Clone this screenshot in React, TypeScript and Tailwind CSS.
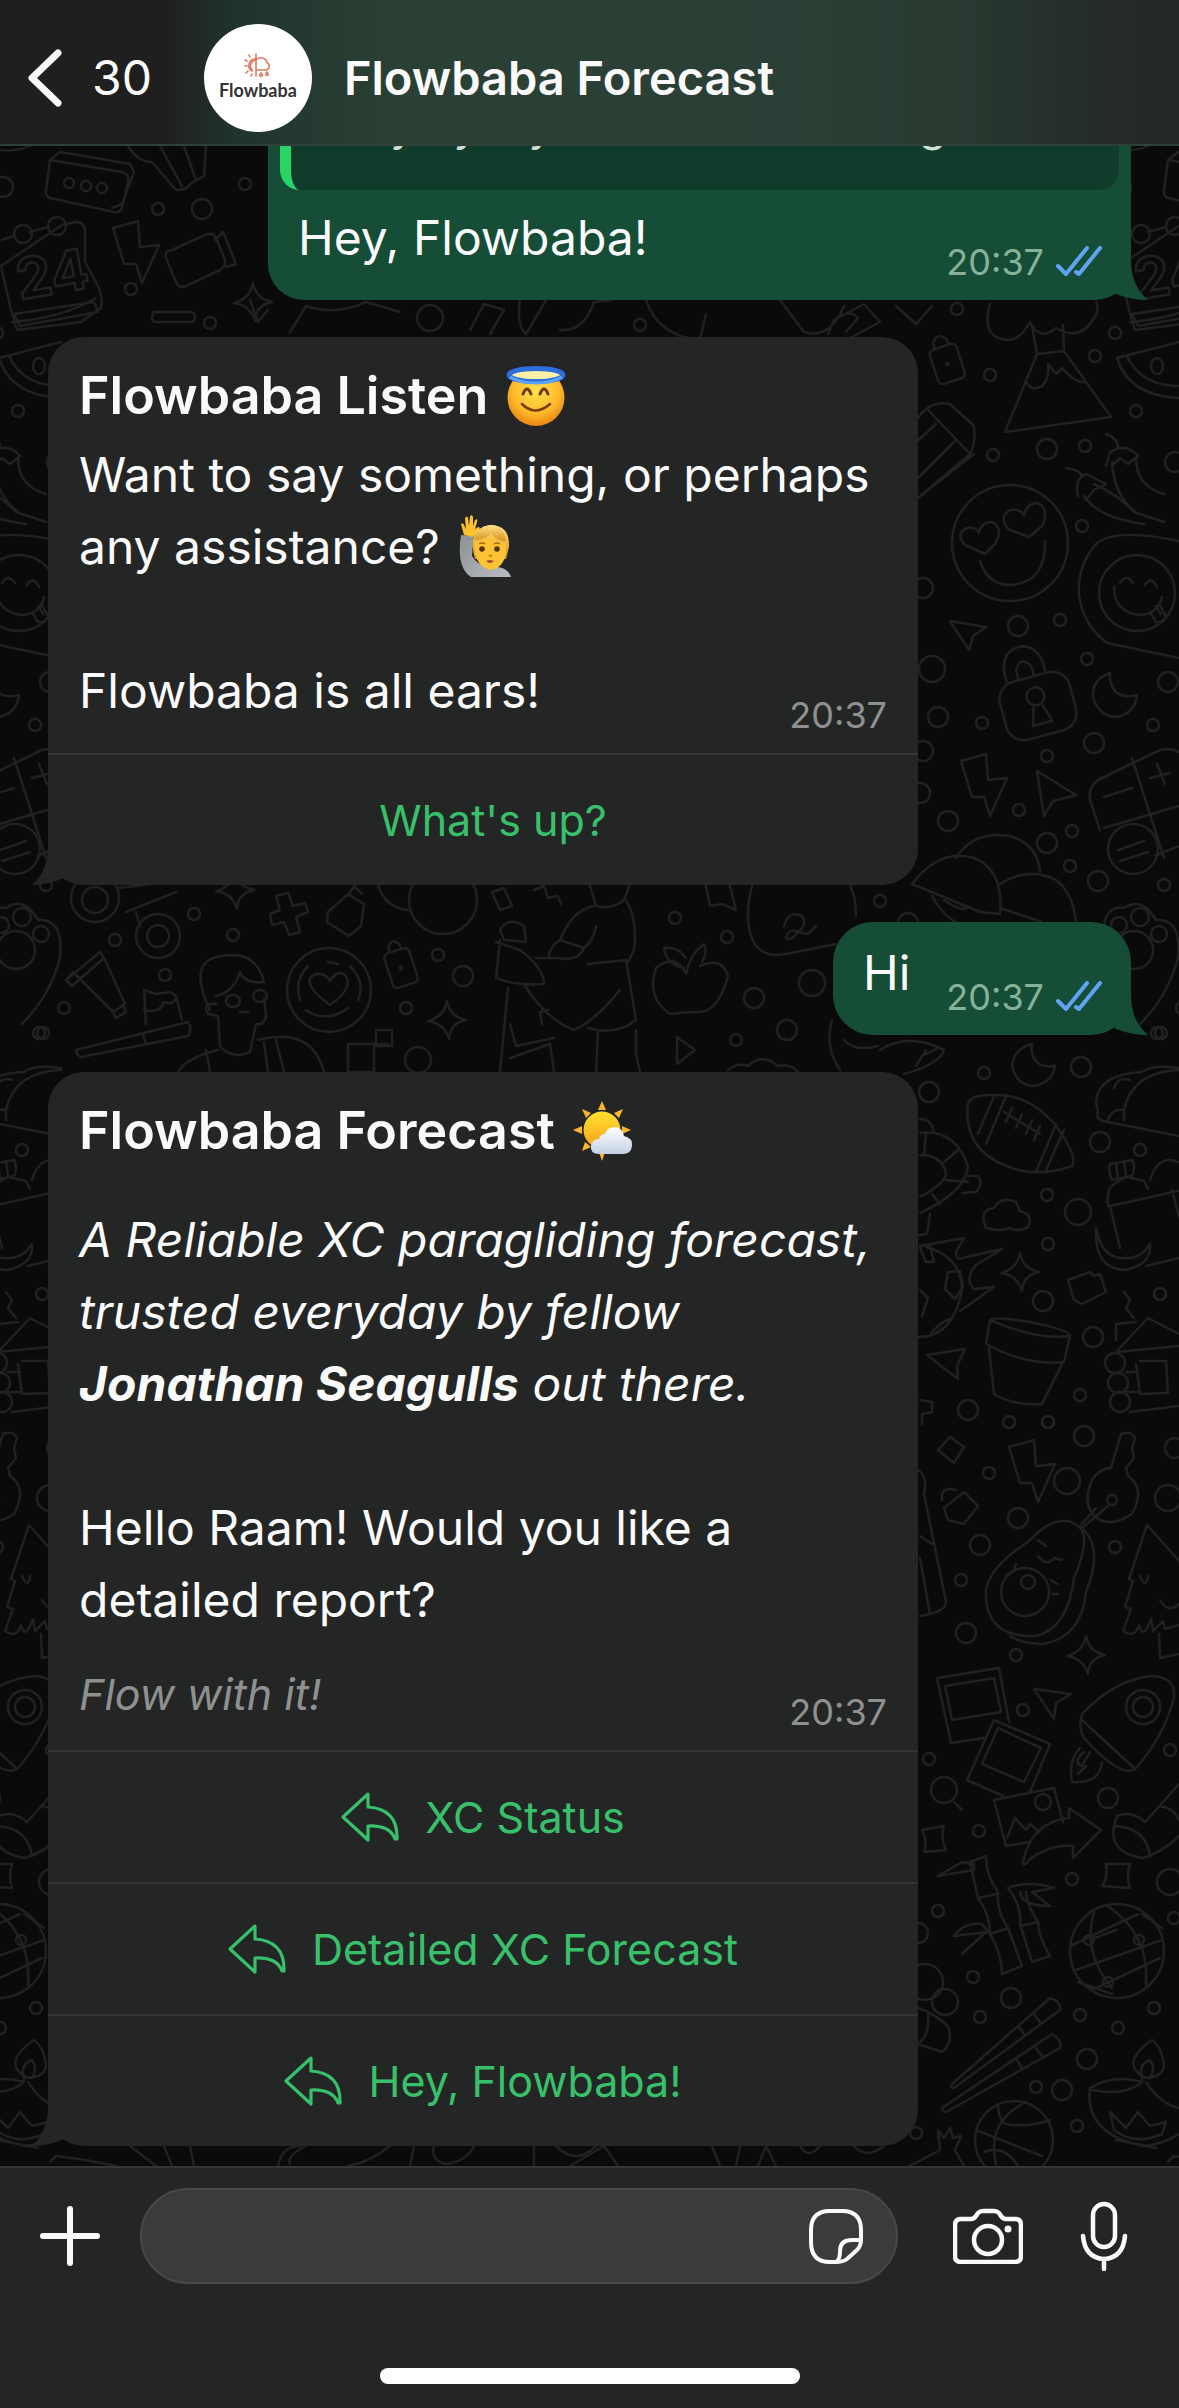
import React from "react";

const SMALL_DOTS: [number, number][] = [
  [245, 184], [158, 209], [131, 289], [957, 309], [990, 375], [1115, 333], [1095, 356], [1136, 411],
  [993, 455], [1085, 446], [1082, 526], [1060, 620], [1087, 659], [982, 723], [1047, 756], [1153, 725],
  [1019, 810], [1072, 831], [1070, 866], [1164, 885], [880, 901], [194, 914], [233, 935], [115, 940],
  [165, 975], [64, 1008], [39, 1033], [438, 955], [406, 1008], [675, 918], [727, 937], [736, 1040],
  [984, 1073], [1161, 1033], [1140, 1150], [1047, 1195], [1048, 1244], [1160, 1294], [1009, 1422],
  [1048, 1422], [1080, 1395], [989, 1473], [961, 1580], [1115, 1547], [1016, 1655], [1023, 1710],
  [929, 1759], [979, 1831], [1072, 1879], [1170, 1750], [938, 1911], [973, 1977], [980, 2017],
  [1080, 2015], [1154, 2008], [1118, 2028], [1036, 2087], [1077, 2126], [916, 2133], [1174, 1918],
  [210, 323], [640, 325],
];
const MEDIUM_DOTS: [number, number][] = [
  [3, 187], [202, 209], [1047, 449], [1175, 462], [1018, 626], [923, 588], [938, 717], [923, 751],
  [1094, 743], [1168, 682], [920, 793], [948, 821], [1047, 843], [1098, 881], [908, 923], [463, 976],
  [754, 998], [787, 1030], [1081, 1067], [929, 1092], [1100, 1142], [1043, 1301], [1093, 1337],
  [968, 1410], [1084, 1436], [1018, 1518], [980, 1545], [966, 1633], [1175, 1448], [1108, 1798],
  [918, 1933], [1011, 1998], [1087, 2059], [1062, 2090],
];
const LARGE_DOTS: [number, number][] = [
  [932, 669], [812, 983], [418, 1060], [1078, 1212], [1067, 1481], [1168, 1498], [944, 1790],
  [1170, 1882], [945, 2002], [430, 318],
];
const SPARKLES: [number, number][] = [[1020, 1272], [1086, 1655], [253, 302], [447, 1020], [235, 890]];
const BOLTS: [number, number][] = [[961, 754], [1009, 1440], [113, 221]];
const POINTERS = [
  "M950 621l36 6-13 9-4 14z",
  "M1037 771l39 24-23 6-9 15z",
  "M927 1355l38-6-8 17 1 13z",
  "M1034 1689l37 5-15 9-2 16z",
  "M677 1037l18 13-18 14z",
];

function Doodles() {
  return (
    <g>
      {SMALL_DOTS.map(([x, y]) => <circle key={`s${x}-${y}`} cx={x} cy={y} r={6} />)}
      {MEDIUM_DOTS.map(([x, y]) => <circle key={`m${x}-${y}`} cx={x} cy={y} r={10} />)}
      {LARGE_DOTS.map(([x, y]) => <circle key={`l${x}-${y}`} cx={x} cy={y} r={13} />)}
      {SPARKLES.map(([x, y]) => (
        <path key={`k${x}`} transform={`translate(${x} ${y})`} d="M0-19Q3-3 19 0Q3 3 2 19Q-3 3-19 1Q-3-3 0-19Z" />
      ))}
      {BOLTS.map(([x, y]) => (
        <path key={`b${x}`} transform={`translate(${x} ${y})`} d="M0 7L25 0l2 26 19-2-17 38-6-19-12 0z" />
      ))}
      {POINTERS.map((d) => <path key={d} d={d} />)}

      {/* speech box, calendar, video camera */}
      <path d="M50 160l72 12q8 2 6 10l-6 26q-2 5-8 4l-64-14q-5-2-4-8l4-30zM50 160l10-8 70 12 4 8-12 32-10 4" />
      <circle cx="69" cy="183" r="5" /><circle cx="86" cy="186" r="5" /><circle cx="102" cy="188" r="5" />
      <path d="M2 240l12-4M30 232l18-5M62 225l14-3q8 0 9 8v32l14 26q4 10 2 20l-20 14-64 8-6-20-10-44zM12 322q50-4 84-24" />
      <circle cx="23" cy="234" r="9" /><circle cx="57" cy="226" r="9" />
      <text x="16" y="296" fontFamily="Inter" fontSize="56" fontWeight="700" transform="rotate(-10 40 275)">24</text>
      <path d="M172 250q-8 0-6 8l10 24q3 7 10 4l34-16q6-4 5-10l-9-22q-3-5-9-4zM215 240l8-8 13 32-10 3" />
      <path d="M128 146q10 16 24 16l24 28q12 0 14-6l14-8 2-30M160 146l22 40M184 146l12 34M0 150q18 2 32-5" />

      {/* strip of doodles between the first two messages */}
      <path d="M14 314l80-12 4 10-78 14zM154 312h36q5 0 5 5t-5 5h-36q-4-4 0-10zM250 300l8 22 10-12M290 332l16-26q30 10 60-4l34 10M470 330l14-26 20 6-14 24M520 300q-4 26 6 34l20-34M560 330q24 2 34-28l18-2M646 300q12 36 54 40l6-26M780 300l24 32q26 8 40-26M828 334l6-14q16-12 24-2l-12 14M834 320l30-16 16 18-30 16M896 306l20 18 16-18" />
      <path d="M990 304q-10 34 18 36 12 0 22-18 10 20 26 6 24 14 38-10 6-8 2-16M1032 326l5 28 27-3-1-26M1037 354l-32 78 106-15-47-66M1026 382q6 10 16 4 8-8 6-22l8 10 6-6q14 16 24 14" />
      <g transform="rotate(-18 947 363)"><rect x="933" y="346" width="28" height="36" rx="5" /><path d="M940 346v-6q6-10 14 0v6" /><circle cx="947" cy="364" r="1" /></g>
      <path d="M1117 358l62-16M1117 358q12 38 62 40M1127 356q14 30 52 30" /><ellipse cx="1157" cy="366" rx="6" ry="8" />
      <path d="M918 418q12-18 32-14l24 22q2 18-4 28l-52 44M928 410l42 44M936 424l-22 20M956 440l-38 38M918 498l56-44" />
      <path d="M1106 434q12 4 12 14M1106 466l4-14q16-10 28 4l-10 8-8-6-8 8M1112 462q2 34 24 50M1136 458q0 28 28 36M1066 468q14 2 16 8M1078 496q-4-18 8-22l20 10-12 6-8 10M1084 496q14 22 60 28M1094 484q26 12 40 28l30 10" />

      {/* heart-eyed face, tongue face, padlock, moon */}
      <circle cx="1010" cy="543" r="58" />
      <path d="M985 554l-20-9q-10-12 2-17 9-1 12 5 2-11 13-11 12 6 3 22zM1029 537l-21-8q-10-14 3-19 9-1 13 5 3-12 13-12 12 4 6 22z" />
      <path d="M980 561q8 24 30 24 36-2 35-44" />
      <circle cx="1137" cy="593" r="38" />
      <path d="M1179 541q-66-14-84 4-18 22-16 50 4 30 28 48l72 15M1114 587q0 24 24 28 20 0 24-18M1120 583q6-10 13 0M1145 585q6-10 12 2M1150 612l6 10q10 2 9-8l-6-10M1156 606l5 8" />
      <g transform="rotate(-15 1038 706)"><rect x="1002" y="676" width="72" height="60" rx="18" /><path d="M1014 676v-12q4-20 20-20t20 20v12M1026 676v-10q8-14 16 0v10" /><circle cx="1038" cy="696" r="9" /><path d="M1034 704l-6 20h20l-6-20" /></g>
      <path d="M1110 673q-18 6-17 24 6 20 24 20 18-4 20-22-14 4-22-4-6-8-5-18zM1032 1044q-18 4-20 22 4 18 20 20 20-2 23-20-14 2-20-6-5-8-3-16z" />

      {/* remote, umbrella hats, paw */}
      <path d="M1100 830l-10-30q-2-16 12-22l58-28q12-2 19 2M1132 758l32 100M1104 828l75-22M1104 797l28-9M1150 778l20-5M1157 764l8 20M1179 846l-24 10" /><circle cx="1133" cy="849" r="25" /><path d="M1118 850l26-9M1120 861l28-9" />
      <path d="M912 884q28-36 62-26 30 12 26 56l-20-2zM956 858q18-28 54-22 28 8 30 36M1000 884q28-18 56-4 18 14 20 44M932 896q10 20 30 30M1000 908l42 14M944 900q20 14 24 6" />
      <circle cx="1119" cy="925" r="8" /><circle cx="1140" cy="917" r="9" /><circle cx="1159" cy="934" r="8" /><circle cx="1134" cy="950" r="19" />
      <path d="M1104 926q2-20 20-18 18-12 32 12 26-2 22 38-10 38-38 66" />

      {/* doodles between the second and third messages */}
      <circle cx="95" cy="900" r="13" /><circle cx="95" cy="898" r="24" /><circle cx="158" cy="936" r="22" /><circle cx="158" cy="936" r="11" />
      <path d="M118 888l66-8M126 912l50-20M136 912l4 14M270 914l10-4-4-14 12-3 5 13 12-3 3 9-12 5 4 15-11 3-5-13-12 3zM328 912l20-18 16 10-3 22-12 10-22-14zM348 896l6-10 8 8" />
      <path d="M66 980l34-28 5 8 20 44-12 8-40-40zM66 980l6 6 32-28M112 1010l4 8 10-6-3-8M76 1050l112-28q5 6 0 14L86 1056q-8 4-10-6zM146 1024l-2-34 12 4 14-2 6 4 6 24M144 1010q16 4 20-8 10 4 12-4M143 1034l3 10" />
      <path d="M210 1010q-24-50 12-54 34-6 42 26-20 2-24-10-6 20-24 24M216 1004q-14-2-8 10l10 2 2 30q12 14 30 6l6-28q8 2 10-8l-2-18" /><ellipse cx="233" cy="1001" rx="7" ry="6" /><ellipse cx="260" cy="996" rx="7" ry="6" />
      <path d="M240 1012h8M178 1072q8-14 40-22M206 1050l4 22M258 1040q54-14 66 32M264 1042l4 30M276 1040l8 32" />
      <circle cx="329" cy="990" r="42" /><path d="M330 1005q-30-22-16-30 10-4 16 6 8-12 15-6 10 12-15 30zM300 1000q-6-20 8-34M350 966q16 16 8 34M306 1010q20 14 42-2M328 962l10 2" />
      <g transform="rotate(-18 401 968)"><rect x="388" y="950" width="26" height="36" rx="5" /><path d="M395 950v-5q6-10 12 0v5" /><circle cx="401" cy="968" r="1" /></g>
      <path d="M348 1044h40M348 1044v28h26v-28M376 1030h16v16h-16zM378 886q8 22 30 24M492 892l12-4 8 18-12 4zM534 890l10-4 4 12 10-2 3 8M706 886l4 20 12-2 14 6-6-24" /><circle cx="443" cy="900" r="34" />
      <path d="M590 886l6 20q16 4 28-6l6-16M594 906q-22 4-34 34l24 8q10-8 12-22M584 948q-6 14-26 10h-22M548 958q4-16 14-18M500 930q8-14 24-4l2 16-22-2zM500 940l-4 38q20 8 48 6 0-16-24-34l-24-8M524 984q20 34 50 46 22-10 46-40M588 964l38-4 10 60q-20 16-48 8M626 900q12 20 8 50l-6 12M508 988l-8 84M510 1024l6 22 38-8M542 1024l-2-12 8-2M510 1058l40-14 4 28M598 1032l-2 40M636 1030v24l4 18" />
      <path d="M686 974q-10-22-30-6-10 30 14 46 18-2 26-2 22 2 32-36-6-20-28-10M686 974q4-20 18-30 4 8-2 18M684 968q-18-4-20-20 14-2 22 10" />
      <path d="M752 886q-10 38 4 60 10 12 30 8l50-10M784 926q4-16 18-10 6 8-4 16-8 10-12 6 2-10 12-6l10 2 8-8M850 886q6 10 6 30M728 1070q10-8 20-4 14-14 30 0 14-2 20 6M832 1020q-8 26 8 50M844 1040q10 12 34 6M880 1050q28-18 64 0-4 14-40 24M922 1056l16-8M916 1066l10-16" />

      {/* sandwich, football, turtle, cloud */}
      <path d="M1096 1102q2-28 46-30 10-8 37-4M1098 1112q-4 8 10 10l71 14M1124 1110q8-38 55-40M1114 1088q4-12 16-8M1108 1120q4-12 16-10v10M1096 1102l2 10" />
      <path d="M968 1104q-6 50 50 66 26 6 54-4 6-10-16-40-26-32-62-31-24-1-26 9zM978 1134l16-38M986 1144l20-48M1036 1172l20-48M1046 1170l18-40M1004 1112l36 22M1006 1122l6-14M1016 1128l6-14M1026 1134l6-14M1034 1140l6-14" />
      <path d="M920 1133q36-4 48 34-4 26-48 46M920 1155q22 0 26 18 0 10-26 24M926 1133l-2 22M958 1150l-14 12M968 1182l-22-2M940 1204l-8-10M968 1176l10 0q6 8-2 16l-14 1M920 1119q12 0 14 14M930 1214l-3 20-12 2" />
      <path d="M986 1228q-8-18 8-20 6-12 22-6l4 9q14 4 8 16-10 6-18 1-10 4-24 0z" />
      <path d="M920 1246l44-8-8 14q0 10 10 5l36-8-26 16q-12 14-2 24l20-2-34 24M926 1247q36 10 36 44-10 48-46 46M920 1248l6 14h8l-4-16M948 1272l12-1 3 16-8 12-10-10zM920 1290l8 8-6 18M930 1336q6-12 22-18" />
      {/* backpack, banana, pennant */}
      <path d="M1110 1206l72-16M1108 1206q-2-18 6-22l12-7 18 4 4 8M1110 1206l10 42M1110 1164l22-4q4 8 0 16l-20 4q-4-8-2-16M1116 1164l2 14M1124 1162l2 14M1150 1180q8-26 28-18M1172 1190l8 30M1096 1228q6 30 26 30 18 2 28-14 2 20-24 26-32 0-30-42zM1146 1266l33-8M1068 1280l22-8 4 4 6-2 6 18-24 12-8-4z" />
      {/* plant pot */}
      <path d="M990 1320q2-4 40 2 40 8 40 14-34 4-80-16zM990 1320l-4 24q40 22 78 18l6-26M989 1348l5 46q20 12 48 10l20-40" />
      {/* cabin */}
      <path d="M1116 1352l32-34 31 16M1116 1352l63-6M1116 1340v-16l20-2M1124 1292l6 8-4 8 8 10M1136 1364l4 30 28-1-2-32h-26M1126 1372h12M1126 1392h14M1130 1412l49-6" /><circle cx="1115" cy="1363" r="10" /><circle cx="1118" cy="1383" r="10" /><circle cx="1120" cy="1402" r="10" />
      <path d="M938 1450l12-13 14 10-10 16zM944 1508l20-16 14 14-14 18-16-4zM942 1500q-2-14 14-10M920 1400l12 2v10l-10 2v10" />
      {/* key and avocado */}
      <path d="M1111 1468l10-34q10-4 14 4l-3 10 2 10-8 10 2 8q18 12 4 38-18 12-32 6-20-12-8-40 8-12 19-12M1096 1508l-16 18M1108 1506l-26 22" /><circle cx="1112" cy="1500" r="5" />
      <path d="M986 1590q4-24 42-48 30-32 50-16 14 10-4 52-6 50-38 58-52 2-50-46zM1082 1528q22 20 4 64-4 44-42 52-22 0-34-8M1038 1540l8 6M1038 1556q8 10 14 4M1054 1558l8 2M1006 1576l8-6 2-6M1050 1580l8 4M1052 1594h6" /><circle cx="1025" cy="1592" r="24" /><circle cx="1028" cy="1582" r="7" />
      {/* bottle beside the card */}
      <path d="M918 1470q10 6 6 24l22 108q0 10-26 14M920 1536l12 8M920 1558l10 56" />
      {/* fir tree */}
      <path d="M1147 1525l-18 54 4 2-8 26 6 2-8 22q12 8 16-6 4 16 12-6l2 12 10-10 2 8 14-4M1147 1525l32 36M1140 1576q6 14 8 0M1160 1600q8 14 19 4M1159 1634l1 24 19-4" />

      {/* photographs and share arrow */}
      <path d="M937 1678l62-10 10 54M937 1678l14 65 33-5M945 1686l49-8 7 34-49 8z" />
      <path d="M994 1720l56 24-20 48M994 1720l-27 60 36 16M998 1728l43 20-17 34-42-18z" />
      <path d="M994 1800l60-12 9 34M994 1800l12 46 24-4M1007 1838l8-20 11 12 4-6 10 8" /><circle cx="1043" cy="1802" r="8" />
      <path d="M1023 1862q8-40 46-44v-10l32 22-28 28v-12q-24-2-44 14-6 8-6 2z" />
      {/* rocket, socks */}
      <path d="M1082 1714q34-36 72-38 22 2 20 22-10 38-38 70-14 12-52-30-6-10-2-24zM1082 1720l52 48M1080 1748q-12 12-8 34 28 2 30-20M1084 1752q-12 10-2 14l8-14M1078 1774l8-8" /><circle cx="1143" cy="1707" r="17" /><circle cx="1143" cy="1707" r="10" />
      <path d="M1179 1784l-34 38q-14-12-28-6-14 36 26 42 20-6 36-22M1160 1806q14 2 19 14M1116 1826q30 2 34 30" />
      <path d="M922 1830l22-4q-4 12 2 24l-22 2q4-10-2-22zM1106 1864l24 0q-4 12 0 24l-28-2q6-8 4-22z" />
      <path d="M954 1802l8 8" />
      {/* bamboo */}
      <path d="M970 1862l16-6q0 20 12 36-2 18 10 36l14 38-20 8q0-20-12-40 0-20-12-36zM978 1898l18-4M990 1934l18-6M938 1876l24-14 12 2v6zM954 1936q10-14 28-12l6 8zM962 1954l26-24M1008 1888q20-8 46 0l-22 4 18 14q-28 0-30-14M1008 1888q14 18 12 36l12 38 18-6q-12-20-12-34-12-18-12-30M1020 1926l18-4" />
      {/* globe */}
      <circle cx="1117" cy="1951" r="47" /><path d="M1070 1946l68-32M1076 1970l86-30M1092 1990l68-32M1094 1912q-12 40 18 76M1106 1905q44 28 40 80M1142 1914l20 14M1078 1982l34 12M1090 1940l26-10" /><circle cx="1089" cy="1940" r="5" /><circle cx="1139" cy="1940" r="5" /><circle cx="1108" cy="1982" r="5" />
      {/* chopsticks */}
      <path d="M952 2084l98-86q12 4 10 12l-106 78q-4 0-2-4zM942 2108l110-74q10 6 8 14l-114 64q-4 0-4-4zM1018 2026l6 8M1034 2014l6 8M1016 2058l6 10M1036 2048l6 8" />
      <circle cx="925" cy="1982" r="18" /><path d="M918 2008q14 4 30 18 6 16-6 26l-24-8M928 2014q2 20-8 28" />
      {/* basketball */}
      <circle cx="1014" cy="2140" r="39" /><path d="M976 2130l66 26M998 2104q0 16 8 20 20 4 44-4M1026 2102q-40 20-30 62M984 2152q20-8 34 14M906 2168l34-18-2-20 6 8 6-10 3 10 8-2-6 14 10 18" />
      {/* oil lamp */}
      <path d="M1152 2040q-34 24-6 38 24-2 16-22-2-10-10-16zM1142 2078q-4-14 8-18 6 8 0 18M1090 2088q24-14 52-6v-4M1090 2088q-6 46 54 58 20-2 35-12M1146 2082q14 22 33 26M1092 2090q30 6 48-6M1110 2112l4 18q20 16 48 4l4-12-16 4-12-14-12 16zM1116 2140l40 8" />

      <path d="M50 2162l6-6 30 4 30 6M130 2146l26 20M164 2146l8 20M190 2146l4 20M300 2146q-18 0-22 20M306 2146q-20 10-16 18M390 2146q-20 16-42 20M414 2146l-4 20M434 2146q-4 14 12 18 20-2 28-18M534 2146v20M556 2146q20 20 40 0M570 2166l34-20 14 20M712 2146l8 20M740 2146l-4 20M758 2166l8-20 10 20M800 2146q8 14 20 0M854 2146q12 14 30 0" />
    </g>
  );
}

function Wallpaper() {
  return (
    <svg aria-hidden="true" className="absolute inset-0 size-full" fill="none" stroke="#202121" strokeWidth="2.5" strokeLinecap="round" strokeLinejoin="round">
      <g transform="translate(0 -146)">
        <Doodles />
        <g transform="translate(-1118 0)"><Doodles /></g>
        <g transform="translate(1118 0)"><Doodles /></g>
      </g>
    </svg>
  );
}

function Logo() {
  return (
    <div className="flex size-27 shrink-0 flex-col items-center justify-center rounded-full bg-white pb-1">
      <svg aria-hidden="true" className="h-7 w-7" viewBox="0 0 28 26" fill="none" stroke="#e0795a" strokeWidth="1.6" strokeLinecap="round">
        <path d="M12 1v22M12 6a6.5 6.5 0 0 0-4 12M12 17h10a4 4 0 0 0 1-7.5C22 5 15 3 12 7" />
        <path d="M8 17a6 6 0 0 1 4-10M6 4L5 2M3 8L1 7M3 13H1M4 18l-2 2M8 21l-1 2" />
        <path d="M17 20q-2.500 3 0 3.500q2.500-.5 0-3.500zM23 19q-2.500 3 0 3.500q2.500-.5 0-3.500z" />
      </svg>
      <span className="font-[Lato] text-[18px] leading-5 font-bold text-[#333]">Flowbaba</span>
    </div>
  );
}

function HaloEmoji() {
  return (
    <svg role="img" aria-label="smiling face with halo" className="size-15" viewBox="0 0 60 60">
      <defs>
        <radialGradient id="face" cx="50%" cy="38%" r="62%">
          <stop offset="0" stopColor="#ffe14c" /><stop offset=".65" stopColor="#fdbb2c" /><stop offset="1" stopColor="#ea8412" />
        </radialGradient>
      </defs>
      <circle cx="30" cy="31.500" r="28.500" fill="url(#face)" />
      <ellipse cx="30" cy="9" rx="25" ry="6" fill="#fff0a8" />
      <ellipse cx="30" cy="9" rx="27" ry="6.500" fill="none" stroke="#2f6fdc" strokeWidth="5" />
      <path d="M4 11q10 6 26 6t26-6" fill="none" stroke="#5ba3fb" strokeWidth="3" />
      <path d="M17 28q4-10 8 0M34 28q4-10 8 0" fill="none" stroke="#6b3a0b" strokeWidth="3" strokeLinecap="round" />
      <path d="M16 38q13 13 28 0" fill="none" stroke="#7a3d0b" strokeWidth="2.500" strokeLinecap="round" />
    </svg>
  );
}

function RaisedHandEmoji() {
  return (
    <svg role="img" aria-label="person raising hand" className="ml-1 inline-block h-16 w-14 align-[-15px]" viewBox="0 0 56 64">
      <defs>
        <linearGradient id="hair" x1="0" y1="0" x2="0" y2="1"><stop offset="0" stopColor="#ffe08a" /><stop offset="1" stopColor="#d99318" /></linearGradient>
        <linearGradient id="shirt" x1="0" y1="0" x2="1" y2="1"><stop offset="0" stopColor="#8d9094" /><stop offset="1" stopColor="#b9bcc0" /></linearGradient>
      </defs>
      <path d="M4 20l12 1-1 20q5 9 16 10 20 0 23 11H14Q-1 52 4 20z" fill="url(#shirt)" />
      <path d="M7 20L4 9q2-2 3 1l2 4L8 3q2-3 3 0l1 8 1-10q2-2 3 1v9l2-6q3-2 2 2l-2 7 3-2q3 0 1 3l-6 7z" fill="#fdc02f" />
      <path d="M16 36q-4-22 17-26 20 0 19 22l-3 12H18z" fill="url(#hair)" />
      <path d="M18 27q10 0 16-6 8 8 14 6l1 8q-1 18-16 20-14-4-15-20z" fill="#fcc434" />
      <path d="M17 25q10 0 17-6 8 8 15 7-3-16-16-16-14 2-16 15z" fill="url(#hair)" />
      <circle cx="25" cy="34" r="2.800" fill="#553117" /><circle cx="40" cy="34" r="2.800" fill="#553117" />
      <path d="M22 29q3-2 6 0M37 29q3-2 6 0M32 40q1 2 3 0" fill="none" stroke="#a76c17" strokeWidth="1.500" />
      <path d="M29 46q4-2 8 0-4 4-8 0z" fill="#a94b35" />
    </svg>
  );
}

function SunCloudEmoji() {
  return (
    <svg role="img" aria-label="sun behind small cloud" className="size-15" viewBox="0 0 60 60">
      <defs>
        <linearGradient id="sun" x1="0" y1="0" x2="0" y2="1"><stop offset="0" stopColor="#ffe22e" /><stop offset="1" stopColor="#f7a01d" /></linearGradient>
        <linearGradient id="cloud" x1="0" y1="0" x2="0" y2="1"><stop offset="0" stopColor="#ffffff" /><stop offset="1" stopColor="#c3d0e3" /></linearGradient>
      </defs>
      <path d="M29 0l4 9h-8zM9 8l9 4-5 5zM50 8l-9 4 5 5zM0 29l9-4v8zM58 29l-9-4v8zM9 50l3-9 6 5zM29 60l-3-9h6z" fill="#f9b52b" />
      <circle cx="29" cy="29" r="18.500" fill="url(#sun)" />
      <path d="M25 53q-8-1-7-8 1-7 8-7 1-5 6-5 2-7 10-7 8 1 9 9 9 2 8 10-1 8-9 8z" fill="url(#cloud)" />
    </svg>
  );
}

function ReplyIcon() {
  return (
    <svg aria-hidden="true" className="h-[50px] w-[58px] shrink-0" viewBox="0 0 58 50" fill="none" stroke="currentColor" strokeWidth="3.200" strokeLinejoin="round">
      <path d="M27 2L2 25l25 23V34q22-1 27 13h2Q57 17 27 15z" />
    </svg>
  );
}

function Ticks() {
  return (
    <svg role="img" aria-label="Read" className="h-8 w-[47px]" viewBox="0 0 47 32" fill="none" stroke="#5fa4f3" strokeWidth="4" strokeLinecap="round" strokeLinejoin="round">
      <path d="M2 20l8 8L31 2M20 26l3 2L44 2" />
    </svg>
  );
}

function Time({ read = false }: { read?: boolean }) {
  return (
    <div className={read ? "flex items-center gap-3 self-end justify-self-end text-[#86b29a]" : "self-end justify-self-end text-[#8f9190]"}>
      <time dateTime="20:37" className="text-[36px] leading-10">20:37</time>
      {read && <Ticks />}
    </div>
  );
}

function OutTail() {
  return (
    <svg aria-hidden="true" className="absolute -right-[17px] bottom-0 h-10 w-11" viewBox="0 0 44 40">
      <path d="M27 0Q27 26 44 40Q28 40 12 34L0 20L10 0Z" fill="#154d37" />
    </svg>
  );
}

function Card({ children, actions }: { children: React.ReactNode; actions: React.ReactNode }) {
  return (
    <article className="relative mr-auto ml-12 w-[74%] max-w-[870px] rounded-[36px] bg-[#242625]">
      <svg aria-hidden="true" className="absolute bottom-0 -left-4 h-10 w-11" viewBox="0 0 44 40">
        <path d="M16 0Q16 26 0 40Q16 40 32 33L44 20L34 0Z" fill="#242625" />
      </svg>
      <div className="relative px-[31px] pt-[26px] pb-[18px]">{children}</div>
      {actions}
    </article>
  );
}

function Action({ label, reply = false }: { label: string; reply?: boolean }) {
  return (
    <button
      type="button"
      className={
        reply
          ? "relative flex h-33 w-full items-center justify-center gap-[26px] border-t-2 border-[#343635] text-[43px] text-[#39c06b]"
          : "relative flex h-33 w-full items-center justify-center border-t-2 border-[#343635] pl-5 text-[43px] text-[#39c06b]"
      }
    >
      {reply && <ReplyIcon />}
      <span>{label}</span>
    </button>
  );
}

export default function App() {
  return (
    <div className="flex min-h-screen flex-col overflow-hidden bg-[#0a0a0a] font-[Inter,'Liberation_Sans',sans-serif] text-[#fafafa]">
      <header className="relative z-10 flex h-[146px] items-center border-b-2 border-[#2f4038] bg-[linear-gradient(90deg,#1f1f1f_0%,#1f1f1f_14%,#20342b_20%,#2a4035_34%,#2a3f35_68%,#293830_82%,#242b28_94%,#242826_100%)] pt-3 pl-7">
        <button type="button" aria-label="Back, 30 unread chats" className="flex items-center gap-7">
          <svg aria-hidden="true" className="h-15 w-9" viewBox="0 0 36 60" fill="none" stroke="currentColor" strokeWidth="7" strokeLinecap="round" strokeLinejoin="round">
            <path d="M30 5L4 30l26 25" />
          </svg>
          <span className="text-[48px]">30</span>
        </button>
        <div className="ml-[52px] flex items-center gap-8">
          <Logo />
          <h1 className="text-[47px] font-semibold">Flowbaba Forecast</h1>
        </div>
      </header>

      <main className="relative flex flex-1 flex-col gap-[37px] overflow-hidden pb-5">
        <Wallpaper />

        <article className="relative -mt-20 mr-12 ml-auto w-[74%] max-w-[863px] rounded-[36px] bg-[#154d37] px-3 pt-3 pb-[18px]">
          <OutTail />
          <blockquote className="relative h-28 overflow-hidden rounded-[20px] border-l-[11px] border-[#2bd467] bg-[#113b2b] px-5 pt-5 text-[44px] leading-[54px] whitespace-nowrap text-[#cfe0d7]">
            Early by my side at the landing
          </blockquote>
          <div className="relative grid pt-3 pr-4 pl-[18px]">
            <p className="col-start-1 row-start-1 pb-2 text-[48px] leading-[72px]">Hey, Flowbaba!</p>
            <div className="col-start-1 row-start-1 grid"><Time read /></div>
          </div>
        </article>

        <Card actions={<Action label="What's up?" />}>
          <h2 className="flex h-[66px] items-center gap-[18px] text-[52px] font-semibold">Flowbaba Listen <HaloEmoji /></h2>
          <div className="grid pt-[10px]">
            <div className="col-start-1 row-start-1 pb-2 text-[48px] leading-[72px]">
              <p>Want to say something, or perhaps<br />any assistance? <RaisedHandEmoji /></p>
              <p className="pt-[72px]">Flowbaba is all ears!</p>
            </div>
            <div className="col-start-1 row-start-1 grid"><Time /></div>
          </div>
        </Card>

        <article className="relative mr-12 ml-auto rounded-[40px] bg-[#154d37] pt-[15px] pr-7 pb-[18px] pl-[30px]">
          <OutTail />
          <div className="relative flex gap-9">
            <p className="pb-2 text-[48px] leading-[72px]">Hi</p>
            <Time read />
          </div>
        </article>

        <Card
          actions={
            <>
              <Action reply label="XC Status" />
              <Action reply label="Detailed XC Forecast" />
              <Action reply label="Hey, Flowbaba!" />
            </>
          }
        >
          <h2 className="flex h-[66px] items-center gap-[18px] text-[52px] font-semibold">Flowbaba Forecast <SunCloudEmoji /></h2>
          <div className="pt-10 text-[48px] leading-[72px]">
            <p className="italic">
              A Reliable XC paragliding forecast,<br />trusted everyday by fellow<br />
              <strong className="font-bold">Jonathan Seagulls</strong> out there.
            </p>
            <p className="pt-[72px]">Hello Raam! Would you like a<br />detailed report?</p>
          </div>
          <div className="flex justify-between pt-7">
            <p className="pb-2 text-[43px] leading-[60px] text-[#8f9190] italic">Flow with it!</p>
            <Time />
          </div>
        </Card>
      </main>

      <footer className="relative border-t-2 border-[#343635] bg-[#242625] pt-5 pb-6">
        <form className="flex items-center pr-[51px] pl-10" onSubmit={(e) => e.preventDefault()}>
          <button type="button" aria-label="Attach" className="shrink-0">
            <svg aria-hidden="true" className="size-15" viewBox="0 0 60 60" stroke="currentColor" strokeWidth="6" strokeLinecap="round"><path d="M30 3v54M3 30h54" /></svg>
          </button>
          <div className="ml-10 flex h-24 min-w-0 flex-1 items-center rounded-full border-2 border-[#484a49] bg-[#3a3b3b] pr-8 pl-10">
            <input type="text" aria-label="Message" className="w-full min-w-0 flex-1 bg-transparent text-[47px] outline-none" />
            <button type="button" aria-label="Stickers" className="shrink-0">
              <svg aria-hidden="true" className="size-14" viewBox="0 0 56 56" fill="none" stroke="currentColor" strokeWidth="4" strokeLinecap="round" strokeLinejoin="round">
                <path d="M28 54h-6Q3 54 3 34V22Q3 3 22 3h12q19 0 19 19v10q0 6-4 10L39 51q-4 3-11 3zM52 32H44Q32 32 32 43q0 8-3 10" />
              </svg>
            </button>
          </div>
          <button type="button" aria-label="Camera" className="ml-[55px] shrink-0">
            <svg aria-hidden="true" className="h-14 w-[70px]" viewBox="0 0 70 56" fill="none" stroke="currentColor" strokeWidth="4.500" strokeLinejoin="round">
              <path d="M8 11h10q3 0 5-3l2-3q2-2 5-2h11q3 0 5 2l2 3q2 3 5 3h9q6 0 6 6v31q0 6-6 6H8q-6 0-6-6V17q0-6 6-6z" />
              <circle cx="35" cy="32" r="14" /><circle cx="55" cy="21" r="3.500" fill="currentColor" stroke="none" />
            </svg>
          </button>
          <button type="button" aria-label="Voice message" className="ml-[57px] shrink-0">
            <svg aria-hidden="true" className="h-[70px] w-12" viewBox="0 0 48 70" fill="none" stroke="currentColor" strokeWidth="4.500" strokeLinecap="round">
              <rect x="13" y="3" width="22" height="43" rx="11" /><path d="M3 35q2 22 21 23 19-1 21-23M24 58v10" />
            </svg>
          </button>
        </form>
        <div className="mx-auto mt-[84px] h-4 w-[420px] max-w-full rounded-full bg-white" />
      </footer>
    </div>
  );
}
